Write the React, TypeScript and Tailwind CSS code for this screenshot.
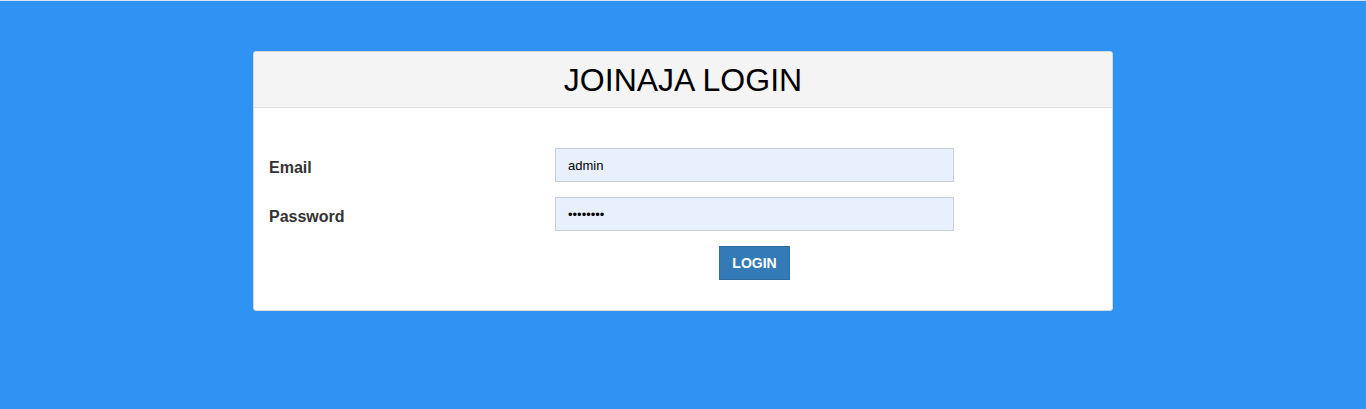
export default function App() {
  return (
    <div className="min-h-[409px] bg-[#2f93f4] border-t border-[#d6e6f5] pt-[50px] font-['Liberation_Sans',Arial,sans-serif]">
      <div className="w-[860px] mx-auto bg-white rounded-[3px] border border-[#d8d8d8] overflow-hidden">
        <div className="h-[56px] bg-[#f4f4f4] border-b border-[#dddddd] flex items-center justify-center">
          <h1 className="text-[32px] leading-none text-black">JOINAJA LOGIN</h1>
        </div>
        <form className="pl-[15px] pt-[40px] pb-[30px]" onSubmit={(e) => e.preventDefault()}>
          <div className="flex items-center h-[34px]">
            <label className="w-[286px] font-bold text-[16px] text-[#333] pt-[6px]">Email</label>
            <input
              type="text"
              defaultValue="admin"
              className="w-[399px] h-[34px] bg-[#e8f0fe] border border-[#c8ccd4] px-3 text-[13px] text-black outline-none"
            />
          </div>
          <div className="flex items-center h-[34px] mt-[15px]">
            <label className="w-[286px] font-bold text-[16px] text-[#333] pt-[6px]">Password</label>
            <input
              type="password"
              defaultValue="admin123"
              className="w-[399px] h-[34px] bg-[#e8f0fe] border border-[#c8ccd4] px-3 text-[13px] text-black outline-none"
            />
          </div>
          <div className="flex mt-[15px]">
            <div className="w-[286px]" />
            <div className="w-[399px] flex justify-center">
              <button
                type="submit"
                className="w-[71px] h-[34px] bg-[#337ab7] border border-[#2e6da4] text-white font-bold text-[14px]"
              >
                LOGIN
              </button>
            </div>
          </div>
        </form>
      </div>
    </div>
  );
}
